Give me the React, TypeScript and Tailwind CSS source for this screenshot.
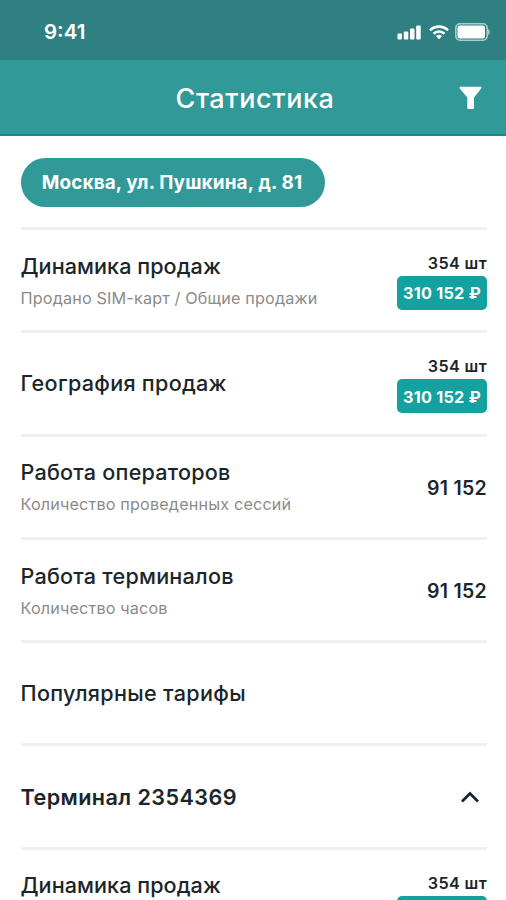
import React from 'react';

type Item = {
  title: string;
  tracking: string;
  subtitle?: string;
  count?: string;
  amount?: string;
  value?: string;
  kind?: 'terminal';
};

const items: Item[] = [
  { title: 'Динамика продаж', tracking: 'tracking-[0.06px]', subtitle: 'Продано SIM-карт / Общие продажи', count: '354 шт', amount: '310 152 ₽' },
  { title: 'География продаж', tracking: 'tracking-[0.27px]', count: '354 шт', amount: '310 152 ₽' },
  { title: 'Работа операторов', tracking: 'tracking-[0.22px]', subtitle: 'Количество проведенных сессий', value: '91 152' },
  { title: 'Работа терминалов', tracking: 'tracking-[0.22px]', subtitle: 'Количество часов', value: '91 152' },
  { title: 'Популярные тарифы', tracking: 'tracking-[0.32px]' },
  { title: 'Терминал 2354369', tracking: 'tracking-[0.42px]', kind: 'terminal' },
  { title: 'Динамика продаж', tracking: 'tracking-[0.06px]', subtitle: 'Продано SIM-карт / Общие продажи', count: '354 шт', amount: '310 152 ₽' },
];

function StatusBar() {
  return (
    <div className="flex h-[60px] shrink-0 items-center justify-between bg-[#2e8082] pt-[3px] pr-4 pl-11 text-white">
      <span className="pt-px text-[20.5px] leading-none font-semibold">9:41</span>
      <div className="flex items-center">
        <svg width="24" height="16" viewBox="0 0 24 16" fill="currentColor">
          <rect x="0.5" y="9.5" width="4.5" height="6" rx="1" />
          <rect x="6.8" y="7.5" width="4.5" height="8" rx="1" />
          <rect x="13" y="4.5" width="4.5" height="11" rx="1" />
          <rect x="19.2" y="1.5" width="4.5" height="14" rx="1" />
        </svg>
        <svg className="ml-2" width="20" height="16" viewBox="0 0 20 16" fill="none" stroke="currentColor" strokeWidth="2.6">
          <path d="M1 6.2a13 13 0 0 1 18 0" />
          <path d="M4.6 9.7a7.8 7.8 0 0 1 10.8 0" />
          <path d="M10 15.3l-3-3.1a4.4 4.4 0 0 1 6 0z" fill="currentColor" stroke="none" />
        </svg>
        <svg className="ml-[6px]" width="35" height="18" viewBox="0 0 35 18">
          <rect x="0.8" y="0.8" width="31.4" height="16.4" rx="4.2" fill="none" stroke="#a9cccd" strokeWidth="1.6" />
          <rect x="2.5" y="2.5" width="27.5" height="13" rx="2" fill="white" />
          <path d="M33.2 6c1.2.6 1.7 1.7 1.7 3s-.5 2.4-1.7 3z" fill="#a9cccd" />
        </svg>
      </div>
    </div>
  );
}

function Header() {
  return (
    <div className="grid h-[76px] shrink-0 grid-cols-[1fr_auto_1fr] items-center border-b-2 border-[#158b86] bg-[#319997] pt-[2px] pr-6 pl-7 text-white">
      <span />
      <h1 className="text-[27px] leading-none font-[450] tracking-[0.6px]">Статистика</h1>
      <svg className="justify-self-end" width="23" height="24" viewBox="0 0 23 24" fill="currentColor">
        <path d="M1.2 0.8h20.6q1.1.5.4 1.7L15 11.5V22q-.1 1-1 1H9.3q-1 0-1-1V11.5L.8 2.5Q.1 1.3 1.2.8z" />
      </svg>
    </div>
  );
}

function Row({ item }: { item: Item }) {
  return (
    <div className="flex h-[103.3px] shrink-0 items-center justify-between border-t-[3px] border-[#f0f0f0] text-[#1b262b]">
      <div className="-ml-[0.5px]">
        <h2 className={`text-[21.6px] leading-[26px] ${item.kind === 'terminal' ? 'font-semibold' : 'font-medium'} ${item.tracking}`}>
          {item.title}
        </h2>
        {item.subtitle && <p className="mt-[9px] text-[16.2px] leading-[20px] tracking-[0.16px] text-[#8b8b8b]">{item.subtitle}</p>}
      </div>
      {item.amount && (
        <div className="flex flex-col items-end pt-[3px]">
          <span className="text-[16.2px] leading-[20px] font-semibold tracking-[0.35px]">{item.count}</span>
          <span className="mt-[3px] flex h-[34px] w-[90px] items-center justify-center rounded-[5px] bg-[#13a2a0] pt-px text-[16.2px] font-bold tracking-[0.25px] whitespace-nowrap text-white">
            {item.amount}
          </span>
        </div>
      )}
      {item.value && <span className="pt-[3px] text-[19.5px] font-semibold tracking-[0.3px]">{item.value}</span>}
      {item.kind === 'terminal' && (
        <svg className="mr-[7px]" width="20" height="14" viewBox="0 0 20 14" fill="none" stroke="#14243a" strokeWidth="2.7">
          <path d="M2 11.5l8-8 8 8" />
        </svg>
      )}
    </div>
  );
}

export default function App() {
  return (
    <div className="flex h-screen flex-col overflow-hidden bg-white font-['Inter','Liberation_Sans',sans-serif]">
      <StatusBar />
      <Header />
      <div className="flex flex-col pt-[22px] pr-[19px] pl-[21px]">
        <button className="flex h-[49px] w-[304px] shrink-0 items-center justify-center rounded-full bg-[#319997] pt-[2px] pr-[2px] text-[18.9px] font-bold tracking-[0.16px] whitespace-nowrap text-white">
          Москва, ул. Пушкина, д. 81
        </button>
        <div className="mt-5 flex flex-col">
          {items.map((item, i) => (
            <Row key={i} item={item} />
          ))}
        </div>
      </div>
    </div>
  );
}
